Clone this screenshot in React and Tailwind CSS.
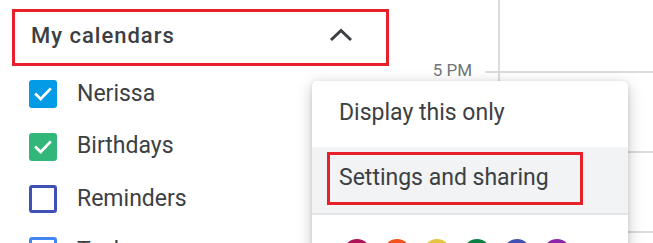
import React from "react";

function Check({ color, checked }) {
  return (
    <div
      className="w-[28px] h-[28px] rounded-[3px] flex items-center justify-center shrink-0"
      style={checked ? { backgroundColor: color } : { border: `3px solid ${color}` }}
    >
      {checked && (
        <svg width="22" height="22" viewBox="0 0 24 24">
          <path d="M4.5 12.5l5 5L19.5 7" fill="none" stroke="white" strokeWidth="3" strokeLinecap="square" />
        </svg>
      )}
    </div>
  );
}

const cals = [
  { name: "Nerissa", color: "#039be5", checked: true },
  { name: "Birthdays", color: "#33b679", checked: true },
  { name: "Reminders", color: "#3f51b5", checked: false },
  { name: "Tasks", color: "#4285f4", checked: false },
];

const dots = ["#ad1457", "#f4511e", "#e4c441", "#0b8043", "#3f51b5", "#8e24aa"];

export default function App() {
  return (
    <div
      className="relative w-[653px] h-[243px] overflow-hidden bg-white flex text-[#3c4043]"
      style={{ fontFamily: "Roboto, 'Liberation Sans', sans-serif" }}
    >
      {/* Sidebar */}
      <div className="w-[420px] shrink-0 pt-[9px] pl-[12px]">
        <div className="w-[377px] h-[57px] border-[3px] border-[#e8202a] flex items-center justify-between pl-[16px] pr-[33px] pb-[4px]">
          <span className="text-[22px] font-medium tracking-[1px]">My calendars</span>
          <svg width="24" height="14" viewBox="0 0 24 14" className="mb-[2px]">
            <path d="M2 12L12 2.5 22 12" fill="none" stroke="#3c4043" strokeWidth="3" />
          </svg>
        </div>
        <div className="mt-[2px] flex flex-col">
          {cals.map((c) => (
            <div key={c.name} className="h-[52.4px] flex items-center pl-[17px] gap-[20px] shrink-0">
              <Check color={c.color} checked={c.checked} />
              <span className="text-[23px]">{c.name}</span>
            </div>
          ))}
        </div>
      </div>

      {/* Calendar grid */}
      <div className="flex-1 flex mt-[-49px]">
        <div className="w-[65px] shrink-0 flex flex-col">
          {["4 PM", "5 PM", "6 PM", "7 PM"].map((t) => (
            <div key={t} className="h-[80px] shrink-0 flex items-center justify-end pr-[13px] text-[17px] text-[#70757a]">
              {t}
            </div>
          ))}
        </div>
        <div className="flex-1 flex flex-col pt-[1px]">
          {[0, 1, 2, 3].map((i) => (
            <div key={i} className="h-[80px] shrink-0 flex">
              <div className="w-[13px] flex items-center">
                <div className="h-[2px] w-full bg-[#dadce0]" />
              </div>
              <div className="flex-1 border-l-[2px] border-[#dadce0] flex items-center">
                <div className="h-[2px] w-full bg-[#dadce0]" />
              </div>
            </div>
          ))}
        </div>
      </div>

      {/* Popup menu */}
      <div className="absolute left-[312px] top-[81px] w-[316px] h-[200px] bg-white rounded-[5px] shadow-[0_4px_16px_rgba(0,0,0,0.22),0_1px_4px_rgba(0,0,0,0.12)] flex flex-col overflow-hidden">
        <div className="h-[66px] shrink-0 flex items-center pl-[27px] pb-[2px] text-[23px]">Display this only</div>
        <div className="h-[66px] shrink-0 bg-[#f1f3f4] flex pt-[5px] pl-[15px]">
          <div className="w-[256px] h-[53px] border-[3px] border-[#e8202a] flex items-center pl-[9px] text-[23px]">
            Settings and sharing
          </div>
        </div>
        <div className="h-[2px] shrink-0 bg-[#e3e4e6]" />
        <div className="flex gap-[12px] pl-[31px] pt-[24px]">
          {dots.map((d) => (
            <div key={d} className="w-[28px] h-[28px] rounded-full shrink-0" style={{ backgroundColor: d }} />
          ))}
        </div>
      </div>
    </div>
  );
}
